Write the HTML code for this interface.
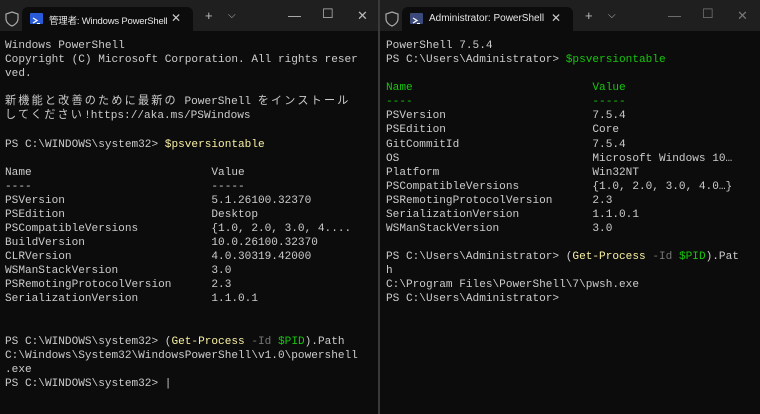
<!DOCTYPE html>
<html><head><meta charset="utf-8"><style>
*{margin:0;padding:0;box-sizing:border-box}
body{width:760px;height:414px;background:#0c0c0c;overflow:hidden;position:relative;font-family:"Liberation Sans",sans-serif}
.win{position:absolute;top:0;height:414px;background:#0c0c0c}
.tb{position:absolute;left:0;top:0;right:0;height:31px;background:#1f1f1f}
.tab{position:absolute;top:7px;left:22px;width:171px;height:24px;background:#0c0c0c;border-radius:6px 6px 0 0}
.tab .t{position:absolute;left:27px;top:6px;font-size:10px;color:#e6e6e6;white-space:nowrap}
.tab .x{position:absolute;right:12px;top:4px;font-size:12px;color:#ccc}
.ico{position:absolute;left:8px;top:6px;width:13px;height:11px;background:#2a5bd7;border-radius:1px}
.sh{position:absolute;left:5px;top:11px}
.cap{position:absolute;top:8px;color:#bbb;font-size:13px}
pre{position:absolute;top:39px;font-family:"Liberation Mono","Noto Sans CJK JP",monospace;font-size:11.1px;line-height:14.08px;color:#cccccc}
.j{letter-spacing:2.2px}
.g{color:#16c60c}.y{color:#f9f1a5}.d{color:#767676}
.div{position:absolute;left:378px;top:0;width:2px;height:414px;background:#3a3a3a}
</style></head><body>
<div class="win" style="left:0;width:378px">
 <div class="tb">
  <svg class="sh" width="14" height="16" viewBox="0 0 14 16"><path d="M7 1 L13 3 V8 C13 11 10 14 7 15 C4 14 1 11 1 8 V3 Z" fill="none" stroke="#aaa" stroke-width="1.2"/></svg>
  <div class="tab"><div class="ico"><svg width="13" height="11"><path d="M3 3 L7 5.5 L3 8" stroke="#fff" fill="none" stroke-width="1.3"/><path d="M7 8.5H10" stroke="#fff"/></svg></div><div class="t" style="font-family:'Liberation Sans','Noto Sans CJK JP',sans-serif;font-size:9.5px;letter-spacing:-0.2px">管理者: Windows PowerShell</div><div class="x">✕</div></div>
  <div class="cap" style="left:205px">+</div><div class="cap" style="left:228px;font-size:10px;top:10px">⌵</div>
  <div class="cap" style="left:288px">—</div><div class="cap" style="left:322px;top:6px">☐</div><div class="cap" style="left:357px">✕</div>
 </div>
<pre style="left:5px">Windows PowerShell
Copyright (C) Microsoft Corporation. All rights reser
ved.

<span class="j">新機能と改善のために最新の</span> PowerShell <span class="j">をインストール</span>
<span class="j">してください</span>!https://aka.ms/PSWindows

PS C:\WINDOWS\system32&gt; <span class="y">$psversiontable</span>

Name                           Value
----                           -----
PSVersion                      5.1.26100.32370
PSEdition                      Desktop
PSCompatibleVersions           {1.0, 2.0, 3.0, 4....
BuildVersion                   10.0.26100.32370
CLRVersion                     4.0.30319.42000
WSManStackVersion              3.0
PSRemotingProtocolVersion      2.3
SerializationVersion           1.1.0.1


PS C:\WINDOWS\system32&gt; (<span class="y">Get-Process</span> <span class="d">-Id</span> <span class="g">$PID</span>).Path
C:\Windows\System32\WindowsPowerShell\v1.0\powershell
.exe
PS C:\WINDOWS\system32&gt; |</pre>
</div>
<div class="div"></div>
<div class="win" style="left:380px;width:380px">
 <div class="tb">
  <svg class="sh" width="14" height="16" viewBox="0 0 14 16"><path d="M7 1 L13 3 V8 C13 11 10 14 7 15 C4 14 1 11 1 8 V3 Z" fill="none" stroke="#aaa" stroke-width="1.2"/></svg>
  <div class="tab"><div class="ico" style="background:#3b4a7a"><svg width="13" height="11"><path d="M3 3 L7 5.5 L3 8" stroke="#fff" fill="none" stroke-width="1.3"/><path d="M7 8.5H10" stroke="#fff"/></svg></div><div class="t">Administrator: PowerShell</div><div class="x">✕</div></div>
  <div class="cap" style="left:205px">+</div><div class="cap" style="left:228px;font-size:10px;top:10px">⌵</div>
  <div class="cap" style="left:288px;color:#777">—</div><div class="cap" style="left:322px;top:6px;color:#777">☐</div><div class="cap" style="left:357px;color:#777">✕</div>
 </div>
<pre style="left:6px">PowerShell 7.5.4
PS C:\Users\Administrator&gt; <span class="g">$psversiontable</span>

<span class="g">Name                           Value</span>
<span class="g">----                           -----</span>
PSVersion                      7.5.4
PSEdition                      Core
GitCommitId                    7.5.4
OS                             Microsoft Windows 10…
Platform                       Win32NT
PSCompatibleVersions           {1.0, 2.0, 3.0, 4.0…}
PSRemotingProtocolVersion      2.3
SerializationVersion           1.1.0.1
WSManStackVersion              3.0

PS C:\Users\Administrator&gt; (<span class="y">Get-Process</span> <span class="d">-Id</span> <span class="g">$PID</span>).Pat
h
C:\Program Files\PowerShell\7\pwsh.exe
PS C:\Users\Administrator&gt;</pre>
</div>
</body></html>
